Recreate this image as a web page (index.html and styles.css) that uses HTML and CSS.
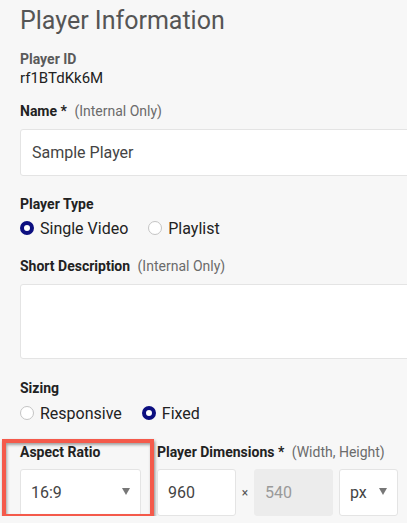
FILE: index.html
```html
<!DOCTYPE html>
<html lang="en">
<head>
<meta charset="utf-8">
<title>Player Information</title>
<link rel="stylesheet" href="styles.css">
</head>
<body>
<div class="page">
  <h1 class="title">Player Information</h1>

  <div class="label label-muted gap-id">Player ID</div>
  <div class="value">rf1BTdKk6M</div>

  <div class="label gap-lg">Name <span class="req">*</span> <span class="hint">(Internal Only)</span></div>
  <div class="input input-wide gap-sm">Sample Player</div>

  <div class="label gap-lg">Player Type</div>
  <div class="radios radios-type">
    <span class="radio-item"><span class="radio checked"></span>Single Video</span>
    <span class="radio-item"><span class="radio"></span>Playlist</span>
  </div>

  <div class="label gap-md">Short Description <span class="hint">(Internal Only)</span></div>
  <div class="textarea gap-sm"></div>

  <div class="label gap-sizing">Sizing</div>
  <div class="radios radios-size">
    <span class="radio-item"><span class="radio"></span>Responsive</span>
    <span class="radio-item"><span class="radio checked"></span>Fixed</span>
  </div>

  <div class="row gap-ar">
    <div class="col col-ratio">
      <div class="label">Aspect Ratio</div>
      <div class="select select-ratio gap-sm"><span>16:9</span><span class="caret"></span></div>
      <div class="highlight"></div>
    </div>
    <div class="col">
      <div class="label">Player Dimensions <span class="req">*</span> <span class="hint">(Width, Height)</span></div>
      <div class="dims gap-sm">
        <div class="input input-dim">960</div>
        <span class="times">×</span>
        <div class="input input-dim disabled">540</div>
        <div class="select select-unit"><span>px</span><span class="caret"></span></div>
      </div>
    </div>
  </div>
</div>
</body>
</html>
```

FILE: styles.css
```css
html, body {
  margin: 0;
  padding: 0;
  background: #f7f7f7;
  overflow: hidden;
}
body {
  font-family: "Roboto", "Liberation Sans", sans-serif;
  color: #222;
}
.page {
  padding: 6px 0 0 20px;
  width: 387px;
}
.title {
  margin: 0;
  font-size: 25px;
  line-height: 30px;
  font-weight: 400;
  color: #555;
}
.label {
  font-size: 14px;
  line-height: 18px;
  font-weight: 700;
  color: #222;
  white-space: nowrap;
}
.label-muted { color: #5a5a5a; }
.req { font-weight: 700; }
.hint {
  font-weight: 400;
  font-size: 14px;
  color: #6b6b6b;
  margin-left: 4px;
}
.value {
  font-size: 15px;
  line-height: 18px;
  color: #222;
  margin-top: 1px;
}
.gap-id { margin-top: 14px; }
.gap-lg { margin-top: 19px; }
.gap-md { margin-top: 17px; }
.gap-sizing { margin-top: 20px; }
.gap-sm { margin-top: 8px; }
.gap-ar { margin-top: 18px; }

.value + .gap-lg { margin-top: 15px; }

.input, .select, .textarea {
  box-sizing: border-box;
  background: #fff;
  border: 1px solid #e4e4e4;
  border-radius: 3px;
  font-size: 16px;
  color: #444;
}
.input {
  height: 47px;
  display: flex;
  align-items: center;
  padding: 0 11px;
}
.input-wide { width: 420px; margin-top: 9px; }
.textarea { width: 420px; height: 75px; margin-top: 9px; }

.radios {
  display: flex;
  gap: 20px;
  height: 24px;
  align-items: center;
  font-size: 16px;
  color: #222;
  margin-top: 3px;
}
.radios-size { margin-top: 4px; }
.radio-item {
  display: flex;
  align-items: center;
  gap: 6px;
}
.radio {
  box-sizing: border-box;
  width: 14px;
  height: 14px;
  border-radius: 50%;
  background: #fff;
  border: 1px solid #c4c4c4;
}
.radio.checked {
  border: 4.5px solid #0c0f80;
}

.row {
  display: flex;
  gap: 16px;
}
.col { position: relative; }
.col-ratio { width: 121px; }

.select {
  height: 47px;
  display: flex;
  align-items: center;
  justify-content: space-between;
  padding: 0 10px 0 10px;
}
.select-ratio { width: 121px; }
.caret {
  width: 0;
  height: 0;
  border-left: 4px solid transparent;
  border-right: 4px solid transparent;
  border-top: 7px solid #777;
  margin-top: -3px;
}
.dims {
  display: flex;
  align-items: center;
}
.input-dim { width: 79px; padding: 0 10px; }
.input.disabled {
  background: #ececec;
  border-color: #ececec;
  color: #9a9a9a;
}
.times {
  width: 18px;
  text-align: center;
  font-size: 12px;
  color: #555;
}
.select-unit {
  width: 59px;
  margin-left: 6px;
  padding: 0 10px;
}
.highlight {
  position: absolute;
  left: -18px;
  top: -4px;
  width: 152px;
  height: 79px;
  box-sizing: border-box;
  border: 4px solid #f45a4b;
  box-shadow: 1px 2px 3px rgba(0, 0, 0, 0.45), inset 1px 2px 3px rgba(0, 0, 0, 0.35);
  pointer-events: none;
}
```
